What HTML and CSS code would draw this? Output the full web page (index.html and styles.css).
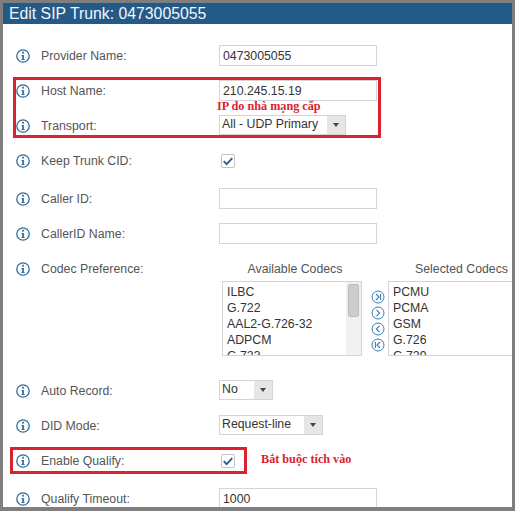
FILE: index.html
```html
<!DOCTYPE html>
<html lang="vi">
<head>
<meta charset="utf-8">
<title>Edit SIP Trunk</title>
<link rel="stylesheet" href="styles.css">
</head>
<body>
<svg class="defs" width="0" height="0" aria-hidden="true">
  <symbol id="info" viewBox="0 0 14 14">
    <circle cx="7" cy="7" r="6.2" fill="none" stroke="#2e6b9b" stroke-width="1.3"/>
    <rect x="6.1" y="2.8" width="1.8" height="1.8" fill="#2e6b9b"/>
    <path d="M5.6 6h2.3v4.2h.9v.9H5.3v-.9h.9V6.9h-.6z" fill="#2e6b9b"/>
  </symbol>
  <symbol id="check" viewBox="0 0 14 14">
    <path d="M2 7.2l3.4 3.4L12 3.6" fill="none" stroke="#2c5f8d" stroke-width="2.2"/>
  </symbol>
</svg>
<main class="frame">
  <div class="panel">
    <h1 class="title">Edit SIP Trunk: 0473005055</h1>
    <form class="form">
      <div class="row r-first">
        <svg class="info"><use href="#info"/></svg><label class="label">Provider Name:</label>
        <input class="input" value="0473005055">
      </div>
      <div class="row">
        <svg class="info"><use href="#info"/></svg><label class="label">Host Name:</label>
        <input class="input" value="210.245.15.19">
      </div>
      <div class="row">
        <svg class="info"><use href="#info"/></svg><label class="label">Transport:</label>
        <div class="select s-transport"><span class="select-text">All - UDP Primary</span><span class="select-btn"></span></div>
      </div>
      <div class="row">
        <svg class="info"><use href="#info"/></svg><label class="label">Keep Trunk CID:</label>
        <span class="checkbox"><svg class="tick"><use href="#check"/></svg></span>
      </div>
      <div class="row r-gap">
        <svg class="info"><use href="#info"/></svg><label class="label">Caller ID:</label>
        <input class="input" value="">
      </div>
      <div class="row">
        <svg class="info"><use href="#info"/></svg><label class="label">CallerID Name:</label>
        <input class="input" value="">
      </div>
      <div class="row r-codec">
        <svg class="info"><use href="#info"/></svg><label class="label">Codec Preference:</label>
        <div class="codecs">
          <div class="codec-col col-a">
            <div class="codec-title">Available Codecs</div>
            <div class="listbox lb-a">
              <div class="list-items"><div>ILBC</div><div>G.722</div><div>AAL2-G.726-32</div><div>ADPCM</div><div>G.723</div></div>
              <div class="scrolltrack"><div class="scrollthumb"></div></div>
            </div>
          </div>
          <div class="movers">
            <svg class="mover" viewBox="0 0 14 14"><circle cx="7" cy="7" r="6" fill="none" stroke="#3d7eae"/><path d="M5 4l3 3-3 3M9.6 4v6" fill="none" stroke="#3d7eae" stroke-width="1.1"/></svg>
            <svg class="mover" viewBox="0 0 14 14"><circle cx="7" cy="7" r="6" fill="none" stroke="#3d7eae"/><path d="M5.5 3.8L8.7 7l-3.2 3.2" fill="none" stroke="#3d7eae" stroke-width="1.1"/></svg>
            <svg class="mover" viewBox="0 0 14 14"><circle cx="7" cy="7" r="6" fill="none" stroke="#3d7eae"/><path d="M8.5 3.8L5.3 7l3.2 3.2" fill="none" stroke="#3d7eae" stroke-width="1.1"/></svg>
            <svg class="mover" viewBox="0 0 14 14"><circle cx="7" cy="7" r="6" fill="none" stroke="#3d7eae"/><path d="M9 4L6 7l3 3M4.4 4v6" fill="none" stroke="#3d7eae" stroke-width="1.1"/></svg>
          </div>
          <div class="codec-col col-b">
            <div class="codec-title">Selected Codecs</div>
            <div class="listbox lb-b">
              <div class="list-items"><div>PCMU</div><div>PCMA</div><div>GSM</div><div>G.726</div><div>G.729</div></div>
            </div>
          </div>
        </div>
      </div>
      <div class="row">
        <svg class="info"><use href="#info"/></svg><label class="label">Auto Record:</label>
        <div class="select s-auto"><span class="select-text">No</span><span class="select-btn"></span></div>
      </div>
      <div class="row">
        <svg class="info"><use href="#info"/></svg><label class="label">DID Mode:</label>
        <div class="select s-did"><span class="select-text">Request-line</span><span class="select-btn"></span></div>
      </div>
      <div class="row">
        <svg class="info"><use href="#info"/></svg><label class="label">Enable Qualify:</label>
        <span class="checkbox"><svg class="tick"><use href="#check"/></svg></span>
      </div>
      <div class="row r-gap">
        <svg class="info"><use href="#info"/></svg><label class="label">Qualify Timeout:</label>
        <input class="input" value="1000">
      </div>
    </form>
    <div class="mark mark-host"></div>
    <div class="mark mark-qualify"></div>
    <div class="note note-ip">IP do nhà mạng cấp</div>
    <div class="note note-qualify">Bắt buộc tích vào</div>
  </div>
</main>
</body>
</html>
```

FILE: styles.css
```css
* { box-sizing: border-box; }
html, body { margin: 0; padding: 0; }
body { width: 515px; height: 511px; overflow: hidden; font-family: "Liberation Sans", Arial, sans-serif; }
.defs { position: absolute; }
.frame { width: 515px; height: 511px; background: #7f7f7f; padding: 3px 3px 4px 3px; }
.panel { position: relative; width: 509px; height: 504px; background: #fff; overflow: hidden; }
.title { margin: 0; height: 21px; background: #235a88; color: #f2f6fa; font-size: 15.8px; font-weight: 400; line-height: 21px; padding-left: 6px; }
.form { display: flex; flex-direction: column; padding-left: 13px; }
.row { display: flex; align-items: center; height: 35px; flex: none; }
.r-first { margin-top: 14px; }
.r-gap { margin-top: 3px; }
.r-codec { height: auto; align-items: flex-start; padding-top: 11px; margin-bottom: 17px; }
.info { width: 14px; height: 14px; flex: none; margin-right: 11px; }
.label { width: 178px; flex: none; font-size: 12.3px; color: #555; }
.input { width: 158px; height: 21px; border: 1px solid #d4d4d4; padding: 0 3px; font: 12.3px "Liberation Sans", Arial, sans-serif; color: #333; background: #fff; outline: none; }
.select { display: flex; height: 20px; margin-bottom: 2px; border: 1px solid #d4d4d4; font-size: 12.3px; color: #333; }
.select-text { flex: 1; padding: 0 2px; line-height: 16px; }
.select-btn { width: 18px; background: #e6e6e6; position: relative; }
.select-btn::after { content: ""; position: absolute; left: 6px; top: 7px; border-left: 3px solid transparent; border-right: 3px solid transparent; border-top: 4px solid #444; }
.s-transport { width: 127px; }
.s-auto { width: 54px; }
.s-did { width: 104px; }
.checkbox { width: 14px; height: 14px; margin-left: 2px; border: 1px solid #c4c4c4; border-radius: 2px; background: #fff; display: flex; }
.tick { width: 12px; height: 12px; }
.codecs { display: flex; margin-left: 3px; }
.codec-col { display: flex; flex-direction: column; flex: none; }
.codec-title { font-size: 12.3px; color: #555; text-align: center; height: 19px; line-height: 15px; white-space: nowrap; }
.col-a { width: 140px; }
.col-a .codec-title { padding-left: 6px; }
.col-b { width: 150px; }
.col-b .codec-title { width: 123px; text-align: right; padding-right: 3px; }
.listbox { height: 75px; border: 1px solid #d4d4d4; overflow: hidden; display: flex; background: #fff; }
.list-items { flex: 1; padding: 2px 0 0 4px; font-size: 12.3px; line-height: 16px; color: #333; }
.scrolltrack { width: 15px; background: #f1f1f1; padding: 2px; flex: none; }
.scrollthumb { height: 33px; background: #cdcdcd; border: 1px solid #bbb; border-radius: 2px; }
.movers { width: 26px; flex: none; display: flex; flex-direction: column; align-items: center; gap: 2px; padding: 28px 0 0 5px; }
.mover { width: 14px; height: 14px; }
.mark { position: absolute; border: 3px solid #d9222e; pointer-events: none; }
.mark-host { left: 10px; top: 74px; width: 368px; height: 61px; }
.mark-qualify { left: 7px; top: 444px; width: 237px; height: 27px; }
.note { position: absolute; font-family: "Liberation Serif", "Times New Roman", serif; font-weight: 700; font-size: 12.2px; color: #d9222e; white-space: nowrap; }
.note-ip { left: 214px; top: 96px; }
.note-qualify { left: 258px; top: 449px; }
```
